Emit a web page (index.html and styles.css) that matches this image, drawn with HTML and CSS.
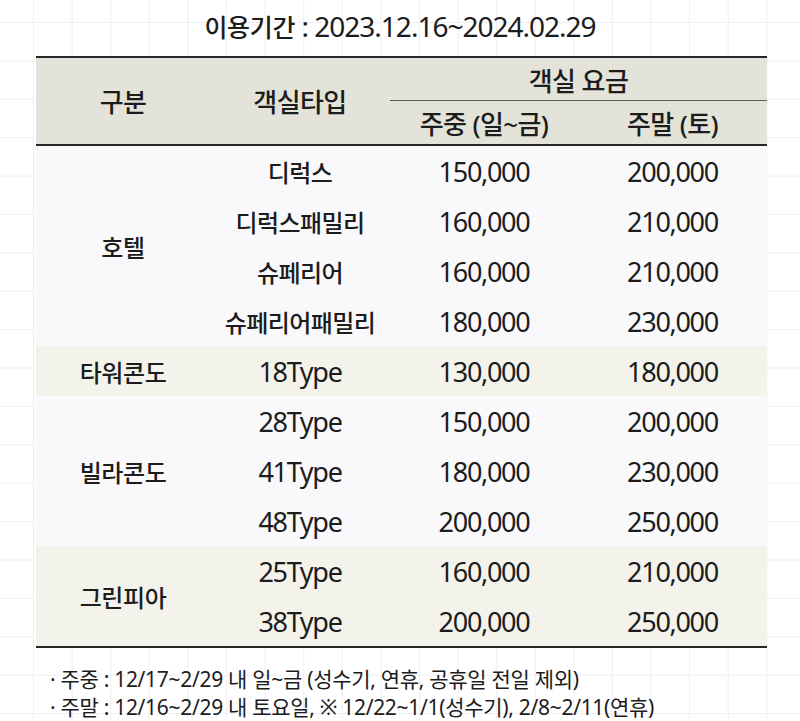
FILE: index.html
```html
<!DOCTYPE html>
<html lang="ko">
<head>
<meta charset="utf-8">
<title>객실 요금</title>
<link rel="stylesheet" href="styles.css">
</head>
<body>
<div class="page">
  <h1 class="title"><span class="t-ko">이용기간</span><span class="t-num"> : 2023.12.16~2024.02.29</span></h1>
  <div class="sheet">
    <div class="head">
      <div class="h h-gubun">구분</div>
      <div class="h h-type">객실타입</div>
      <div class="h h-rate">객실 요금</div>
      <div class="h h-wk">주중 (일~금)</div>
      <div class="h h-we">주말 (토)</div>
    </div>
    <div class="body">
      <div class="group light">
        <div class="label">호텔</div>
        <div class="rows">
          <div class="row"><span class="ko">디럭스</span><span class="num">150,000</span><span class="num">200,000</span></div>
          <div class="row"><span class="ko">디럭스패밀리</span><span class="num">160,000</span><span class="num">210,000</span></div>
          <div class="row"><span class="ko">슈페리어</span><span class="num">160,000</span><span class="num">210,000</span></div>
          <div class="row"><span class="ko">슈페리어패밀리</span><span class="num">180,000</span><span class="num">230,000</span></div>
        </div>
      </div>
      <div class="group beige">
        <div class="label">타워콘도</div>
        <div class="rows">
          <div class="row"><span class="num">18Type</span><span class="num">130,000</span><span class="num">180,000</span></div>
        </div>
      </div>
      <div class="group light">
        <div class="label">빌라콘도</div>
        <div class="rows">
          <div class="row"><span class="num">28Type</span><span class="num">150,000</span><span class="num">200,000</span></div>
          <div class="row"><span class="num">41Type</span><span class="num">180,000</span><span class="num">230,000</span></div>
          <div class="row"><span class="num">48Type</span><span class="num">200,000</span><span class="num">250,000</span></div>
        </div>
      </div>
      <div class="group beige">
        <div class="label">그린피아</div>
        <div class="rows">
          <div class="row"><span class="num">25Type</span><span class="num">160,000</span><span class="num">210,000</span></div>
          <div class="row"><span class="num">38Type</span><span class="num">200,000</span><span class="num">250,000</span></div>
        </div>
      </div>
    </div>
  </div>
  <ul class="notes">
    <li>· 주중 : 12/17~2/29 내 일~금 (성수기, 연휴, 공휴일 전일 제외)</li>
    <li>· 주말 : 12/16~2/29 내 토요일, ※ 12/22~1/1(성수기), 2/8~2/11(연휴)</li>
  </ul>
</div>
</body>
</html>
```

FILE: styles.css
```css
html, body {
  margin: 0;
  padding: 0;
}
body {
  width: 800px;
  height: 721px;
  overflow: hidden;
  color: #1c1c1c;
  font-family: "Noto Sans", "Noto Sans CJK KR", sans-serif;
  background-color: #ffffff;
  background-image:
    linear-gradient(to right, #eeeef4 1px, transparent 1px),
    linear-gradient(to bottom, #eeeef4 1px, transparent 1px);
  background-size: 38.6px 38.4px;
  background-position: 33px 22px;
}
.page {
  display: flex;
  flex-direction: column;
}
.title {
  margin: 0;
  height: 56px;
  display: flex;
  align-items: center;
  justify-content: center;
  font-weight: 400;
  padding-bottom: 4px;
  box-sizing: border-box;
}
.t-ko {
  font-size: 25px;
  font-weight: 500;
  letter-spacing: -0.3px;
}
.t-num {
  font-size: 28px;
  letter-spacing: -1px;
  white-space: pre;
}
.sheet {
  margin-left: 36px;
  width: 731px;
}
.head {
  display: grid;
  grid-template-columns: 174px 180px 188px 189px;
  grid-template-rows: 43px 43px;
  background: #e3e3d9;
  border-top: 2px solid #262626;
  border-bottom: 2px solid #262626;
}
.h {
  display: flex;
  align-items: center;
  justify-content: center;
  font-size: 26px;
  font-weight: 500;
  letter-spacing: -0.6px;
}
.h-gubun { grid-column: 1; grid-row: 1 / 3; }
.h-type { grid-column: 2; grid-row: 1 / 3; }
.h-rate {
  grid-column: 3 / 5;
  grid-row: 1;
  border-bottom: 1px solid #5a5a5a;
  padding-top: 2px;
}
.h-wk { grid-column: 3; grid-row: 2; }
.h-we { grid-column: 4; grid-row: 2; }
.body {
  border-bottom: 2px solid #262626;
}
.group {
  display: grid;
  grid-template-columns: 174px 1fr;
}
.light { background: #f9f9fb; }
.beige { background: #f3f3ec; }
.label {
  display: flex;
  align-items: center;
  justify-content: center;
  font-size: 24px;
  font-weight: 500;
  letter-spacing: -0.4px;
}
.rows {
  display: flex;
  flex-direction: column;
}
.row {
  height: 50px;
  display: grid;
  grid-template-columns: 180px 188px 189px;
  align-items: center;
}
.row > span {
  text-align: center;
}
.ko {
  font-size: 24px;
  font-weight: 500;
  letter-spacing: -0.6px;
}
.num {
  font-size: 27px;
  letter-spacing: -1.3px;
}
.notes {
  list-style: none;
  margin: 17px 0 0 50px;
  padding: 0;
  font-size: 21px;
  letter-spacing: -0.3px;
  line-height: 28px;
}
```
